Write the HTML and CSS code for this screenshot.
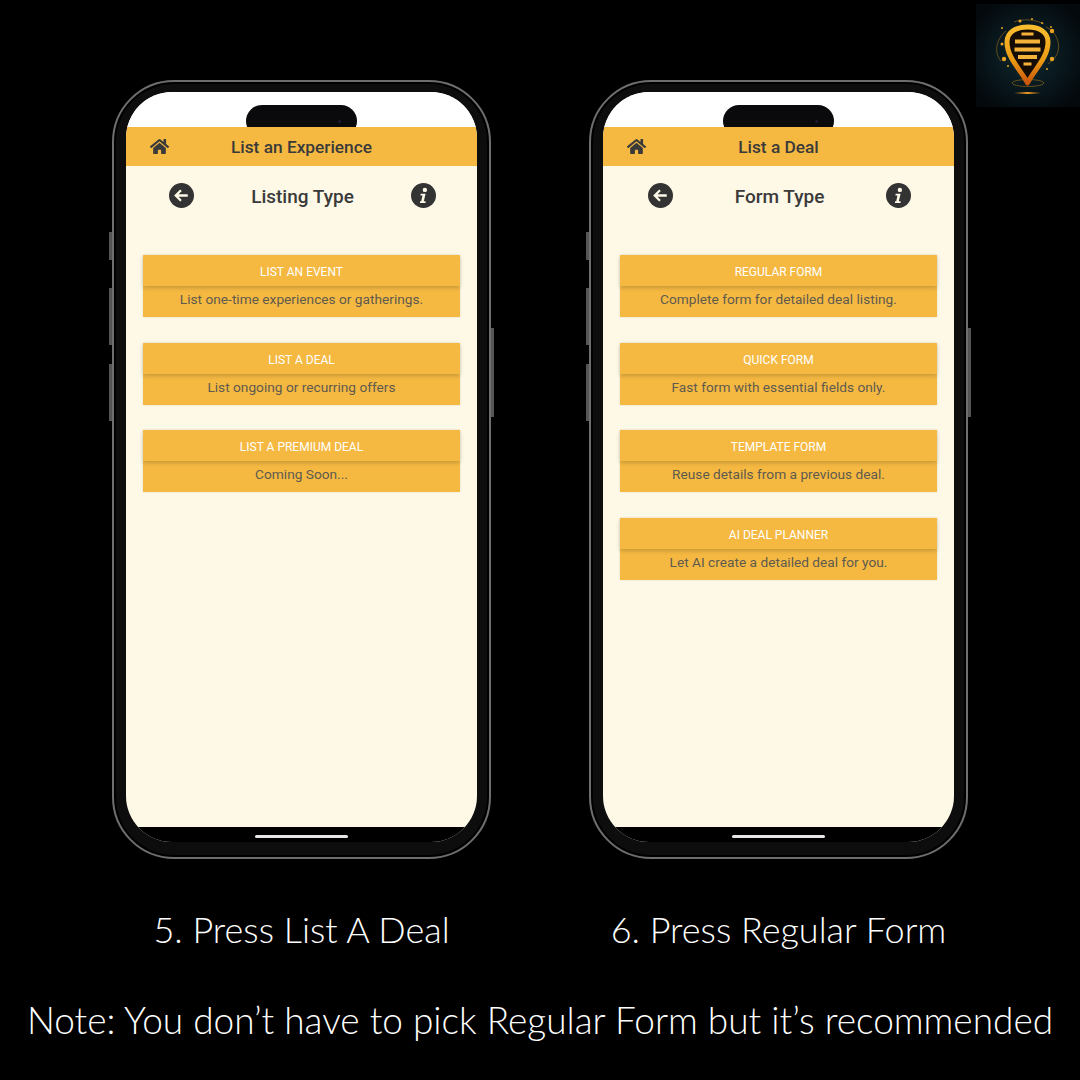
FILE: index.html
```html
<!DOCTYPE html>
<html lang="en">
<head>
  <meta charset="UTF-8" />
  <title>List a Deal steps</title>
  <link rel="stylesheet" href="styles.css">
</head>
<body>
  <div class="logo">
    <svg width="104" height="103" viewBox="0 0 104 103">
      <defs>
        <radialGradient id="glow" cx="50%" cy="50%" r="60%">
          <stop offset="0" stop-color="#0e2a31"/>
          <stop offset="1" stop-color="#04090d"/>
        </radialGradient>
        <linearGradient id="pin" x1="0" y1="0" x2="0" y2="1">
          <stop offset="0" stop-color="#f8bd2e"/>
          <stop offset="0.6" stop-color="#eb9a14"/>
          <stop offset="1" stop-color="#c9560c"/>
        </linearGradient>
        <linearGradient id="shine" x1="0" y1="0" x2="1" y2="0">
          <stop offset="0" stop-color="#d9861a" stop-opacity="0"/>
          <stop offset="0.5" stop-color="#f09a22"/>
          <stop offset="1" stop-color="#d9861a" stop-opacity="0"/>
        </linearGradient>
      </defs>
      <rect width="104" height="103" fill="url(#glow)"/>
      <g fill="none" stroke="#7d5c1a" stroke-width="0.800">
        <path d="M30 27C21 34 17 48 25 57"/>
        <path d="M70 23C81 28 86 42 80 52C77 57 74 58 72 60"/>
        <path d="M38 18C48 14 60 16 68 20"/>
        <ellipse cx="52" cy="79" rx="16" ry="3.500"/>
      </g>
      <path d="M51.500 79C45 66 31 54 31 38C31 28 40 23 51.500 23C63 23 72 28 72 38C72 54 58 66 51.500 79Z" fill="#150c04" stroke="url(#pin)" stroke-width="5" stroke-linejoin="round"/>
      <g stroke="#f5b238">
        <path d="M45.500 30H57.500" stroke-width="3"/>
        <path d="M39 37.500H64" stroke-width="4"/>
        <path d="M38.500 45.500H64.500" stroke-width="4"/>
        <path d="M42 53H61" stroke-width="4"/>
        <path d="M47.500 60H55.500" stroke-width="3"/>
      </g>
      <g fill="#eaa422">
        <circle cx="56" cy="15" r="1"/>
        <circle cx="44" cy="17" r="1.500"/>
        <circle cx="66" cy="19" r="1"/>
        <circle cx="75" cy="23" r="1"/>
        <circle cx="26" cy="24" r="1"/>
        <circle cx="76" cy="27" r="2.200"/>
        <circle cx="26" cy="40" r="1.500"/>
        <circle cx="28" cy="55" r="2.200"/>
        <circle cx="76" cy="55" r="2.200"/>
        <circle cx="32" cy="62" r="1"/>
        <circle cx="71" cy="65" r="1"/>
      </g>
      <rect x="38" y="88" width="27" height="2" fill="url(#shine)"/>
    </svg>
  </div>

  <main class="stage">
    <div class="phones">
      <section class="step">
        <div class="phone">
          <span class="side side-a"></span>
          <span class="side side-b"></span>
          <span class="side side-c"></span>
          <span class="side side-d"></span>
          <div class="island"><span class="lens"></span></div>
          <div class="screen">
            <div class="statusbar"></div>
            <header class="appbar">
              <svg class="home" viewBox="0 0 576 512"><path d="M280 148 96 300v164a16 16 0 0 0 16 16l112-.3a16 16 0 0 0 16-16V368a16 16 0 0 1 16-16h64a16 16 0 0 1 16 16v95.600a16 16 0 0 0 16 16l112 .4a16 16 0 0 0 16-16V300L296 148a12 12 0 0 0-16 0zM572 251l-84-69V44a12 12 0 0 0-12-12h-56a12 12 0 0 0-12 12v72l-89-74a48 48 0 0 0-61 0L4 251a12 12 0 0 0-2 17l26 31a12 12 0 0 0 17 2L280 107a12 12 0 0 1 16 0l235 194a12 12 0 0 0 17-2l26-31a12 12 0 0 0-2-17z"/></svg>
              <h1>List an Experience</h1>
            </header>
            <div class="content">
              <div class="titlerow">
                <svg class="round" viewBox="0 0 24 24"><circle cx="12" cy="12" r="12"/><path d="M18 12H7M11.500 7 6.500 12l5 5" fill="none" stroke="#fef8e7" stroke-width="2.200"/></svg>
                <h2>Listing Type</h2>
                <svg class="round" viewBox="0 0 24 24"><circle cx="12" cy="12" r="12"/><circle cx="13.300" cy="6.600" r="2.100" fill="#fef8e7"/><path d="M9.300 10.300h4.700l-1.700 7.200h1.700v1.700H8.600v-1.700h1.200l1.200-5.500H9z" fill="#fef8e7"/></svg>
              </div>
              <div class="options">
                <div class="option">
                  <div class="option-head">LIST AN EVENT</div>
                  <div class="option-text">List one-time experiences or gatherings.</div>
                </div>
                <div class="option">
                  <div class="option-head">LIST A DEAL</div>
                  <div class="option-text">List ongoing or recurring offers</div>
                </div>
                <div class="option">
                  <div class="option-head">LIST A PREMIUM DEAL</div>
                  <div class="option-text">Coming Soon...</div>
                </div>
              </div>
            </div>
            <div class="chin"><span class="homebar"></span></div>
          </div>
        </div>
        <p class="caption">5. Press List A Deal</p>
      </section>

      <section class="step">
        <div class="phone">
          <span class="side side-a"></span>
          <span class="side side-b"></span>
          <span class="side side-c"></span>
          <span class="side side-d"></span>
          <div class="island"><span class="lens"></span></div>
          <div class="screen">
            <div class="statusbar"></div>
            <header class="appbar">
              <svg class="home" viewBox="0 0 576 512"><path d="M280 148 96 300v164a16 16 0 0 0 16 16l112-.3a16 16 0 0 0 16-16V368a16 16 0 0 1 16-16h64a16 16 0 0 1 16 16v95.600a16 16 0 0 0 16 16l112 .4a16 16 0 0 0 16-16V300L296 148a12 12 0 0 0-16 0zM572 251l-84-69V44a12 12 0 0 0-12-12h-56a12 12 0 0 0-12 12v72l-89-74a48 48 0 0 0-61 0L4 251a12 12 0 0 0-2 17l26 31a12 12 0 0 0 17 2L280 107a12 12 0 0 1 16 0l235 194a12 12 0 0 0 17-2l26-31a12 12 0 0 0-2-17z"/></svg>
              <h1>List a Deal</h1>
            </header>
            <div class="content">
              <div class="titlerow titlerow-form">
                <svg class="round" viewBox="0 0 24 24"><circle cx="12" cy="12" r="12"/><path d="M18 12H7M11.500 7 6.500 12l5 5" fill="none" stroke="#fef8e7" stroke-width="2.200"/></svg>
                <h2>Form Type</h2>
                <svg class="round" viewBox="0 0 24 24"><circle cx="12" cy="12" r="12"/><circle cx="13.300" cy="6.600" r="2.100" fill="#fef8e7"/><path d="M9.300 10.300h4.700l-1.700 7.200h1.700v1.700H8.600v-1.700h1.200l1.200-5.500H9z" fill="#fef8e7"/></svg>
              </div>
              <div class="options">
                <div class="option">
                  <div class="option-head">REGULAR FORM</div>
                  <div class="option-text">Complete form for detailed deal listing.</div>
                </div>
                <div class="option">
                  <div class="option-head">QUICK FORM</div>
                  <div class="option-text">Fast form with essential fields only.</div>
                </div>
                <div class="option">
                  <div class="option-head">TEMPLATE FORM</div>
                  <div class="option-text">Reuse details from a previous deal.</div>
                </div>
                <div class="option">
                  <div class="option-head">AI DEAL PLANNER</div>
                  <div class="option-text">Let AI create a detailed deal for you.</div>
                </div>
              </div>
            </div>
            <div class="chin"><span class="homebar"></span></div>
          </div>
        </div>
        <p class="caption">6. Press Regular Form</p>
      </section>
    </div>
    <p class="note">Note: You don’t have to pick Regular Form but it’s recommended</p>
  </main>
</body>
</html>
```

FILE: styles.css
```css
html, body {
  margin: 0;
  background: #000;
}
body {
  width: 1080px;
  height: 1080px;
  overflow: hidden;
  position: relative;
  font-family: Roboto, "Liberation Sans", sans-serif;
}
.logo {
  position: absolute;
  left: 976px;
  top: 4px;
  width: 104px;
  height: 103px;
}
.logo svg {
  display: block;
}
.stage {
  padding-top: 80px;
}
.phones {
  display: flex;
  gap: 98px;
  padding-left: 112px;
}
.step {
  width: 379px;
}
.phone {
  position: relative;
  box-sizing: border-box;
  width: 379px;
  height: 779px;
  padding: 10px 12px 0;
  border: 2px solid #6e6e6e;
  border-radius: 62px;
  background: #0d0d0d;
  box-shadow: inset 0 0 0 2px #000;
}
.side {
  position: absolute;
  width: 3px;
  background: #555;
}
.side-a { left: -5px; top: 150px; height: 28px; }
.side-b { left: -5px; top: 206px; height: 57px; }
.side-c { left: -5px; top: 282px; height: 57px; }
.side-d { right: -5px; top: 246px; height: 89px; }
.island {
  position: absolute;
  left: 132px;
  top: 23px;
  width: 111px;
  height: 32px;
  border-radius: 16px;
  background: #0a0a0c;
}
.lens {
  position: absolute;
  right: 16px;
  top: 15px;
  width: 3px;
  height: 3px;
  border-radius: 50%;
  background: #1b1b33;
}
.screen {
  display: flex;
  flex-direction: column;
  width: 351px;
  height: 750px;
  overflow: hidden;
  border-radius: 46px;
  background: #fef8e7;
}
.statusbar {
  height: 35px;
  background: #fff;
}
.appbar {
  display: flex;
  align-items: center;
  justify-content: center;
  position: relative;
  height: 39px;
  background: #f5b942;
}
.home {
  position: absolute;
  left: 24px;
  top: 11px;
  width: 19px;
  height: 17px;
  fill: #3a3a3a;
}
.appbar h1 {
  margin: 1px 0 0;
  font-size: 17.300px;
  font-weight: 500;
  color: #3a3a3a;
}
.content {
  flex: 1;
}
.titlerow {
  display: flex;
  align-items: center;
  justify-content: space-between;
  height: 60px;
  padding: 0 41px 0 43px;
}
.titlerow-form {
  padding: 0 43px 0 45px;
}
.round {
  width: 25px;
  height: 25px;
  margin-top: -2px;
  fill: #333;
  flex: none;
}
.titlerow h2 {
  margin: 0;
  font-size: 19px;
  font-weight: 500;
  color: #3a3a3a;
}
.options {
  display: flex;
  flex-direction: column;
  gap: 25.500px;
  padding: 29px 17px 0;
}
.option {
  background: #f5b942;
  box-shadow: 0 0 2px rgba(0,0,0,0.12);
}
.option-head {
  height: 31px;
  line-height: 34px;
  text-align: center;
  font-size: 12px;
  color: #fff;
  box-shadow: 0 2px 4px rgba(0,0,0,0.18);
}
.option-text {
  height: 31px;
  line-height: 27px;
  text-align: center;
  font-size: 13.700px;
  color: #5f5a4e;
}
.chin {
  display: flex;
  justify-content: center;
  height: 15px;
  padding-top: 8px;
  box-sizing: border-box;
  background: #000;
}
.homebar {
  width: 93px;
  height: 3px;
  border-radius: 2px;
  background: #e6e6e6;
}
.caption {
  margin: 48px 0 0;
  text-align: center;
  font-family: Lato, sans-serif;
  font-size: 36px;
  font-weight: 300;
  line-height: 44px;
  color: #fff;
}
.note {
  margin: 47px 0 0;
  text-align: center;
  font-family: Lato, sans-serif;
  font-size: 37px;
  font-weight: 300;
  line-height: 44px;
  color: #fff;
  white-space: nowrap;
}
```
